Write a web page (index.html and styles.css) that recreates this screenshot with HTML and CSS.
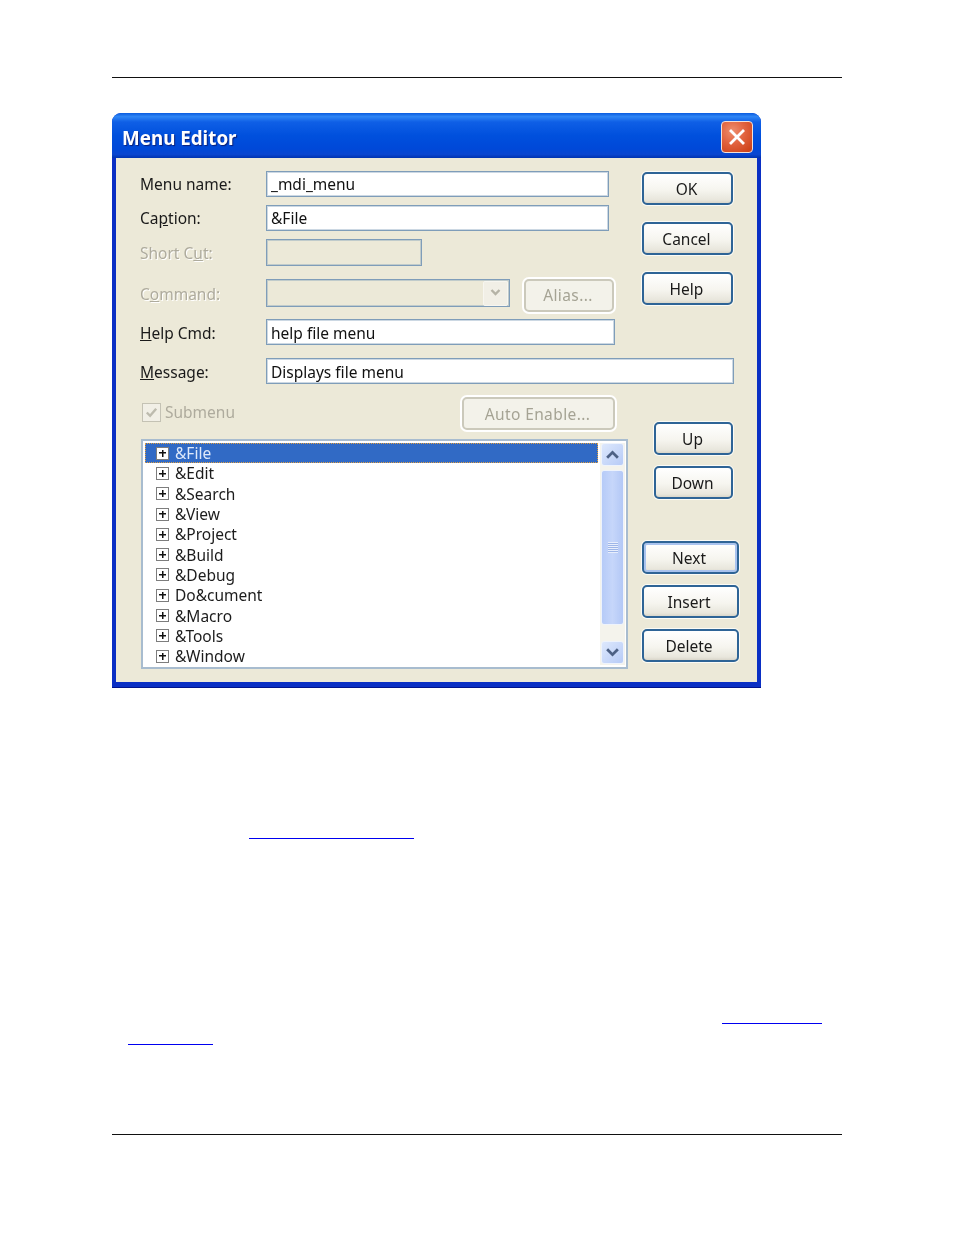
FILE: index.html
```html
<!DOCTYPE html>
<html lang="en">
<head>
<meta charset="utf-8">
<title>Menu Editor</title>
<link rel="stylesheet" href="styles.css">
</head>
<body>
<div class="page">
  <hr class="rule rule-top">
  <section class="dialog">
    <header class="titlebar">
      <h1 class="title">Menu Editor</h1>
      <button class="close" aria-label="Close">
        <svg viewBox="0 0 30 30" width="20" height="20"><path d="M6 6 L24 24 M24 6 L6 24" stroke="#fff" stroke-width="4.2" stroke-linecap="square" fill="none"/></svg>
      </button>
    </header>
    <div class="panel">
      <div class="top">
        <div class="fields">
          <div class="row row-name"><label class="label">Menu name:</label><div class="field field-name">_mdi_menu</div></div>
          <div class="row row-caption"><label class="label">Ca<u>p</u>tion:</label><div class="field field-name">&amp;File</div></div>
          <div class="row row-short"><label class="label disabled">Short C<u>u</u>t:</label><div class="field field-short off"></div></div>
          <div class="row row-command">
            <label class="label disabled">C<u>o</u>mmand:</label>
            <div class="field field-command off">
              <span class="combo-btn"><svg viewBox="0 0 12 10" width="13" height="10"><path d="M2 2 L6 6 L10 2" stroke="#b5b3a6" stroke-width="2.4" fill="none"/></svg></span>
            </div>
            <button class="btn btn-off btn-alias">Alias...</button>
          </div>
          <div class="row row-help"><label class="label"><u>H</u>elp Cmd:</label><div class="field field-help">help file menu</div></div>
        </div>
        <div class="actions">
          <button class="btn btn-main">OK</button>
          <button class="btn btn-main">Cancel</button>
          <button class="btn btn-main">Help</button>
        </div>
      </div>
      <div class="row row-message"><label class="label"><u>M</u>essage:</label><div class="field field-message">Displays file menu</div></div>
      <div class="bottom">
        <div class="left">
          <div class="submenu">
            <span class="check"><span class="check-box"><svg viewBox="0 0 16 16" width="15" height="15"><path d="M3 8 L6.5 11.5 L13 4" stroke="#bdbbae" stroke-width="2.6" fill="none"/></svg></span><span class="check-text">Submenu</span></span>
            <button class="btn btn-off btn-auto">Auto Enable...</button>
          </div>
          <div class="list">
            <ul class="tree">
              <li class="item selected"><span class="plus"></span>&amp;File</li>
              <li class="item"><span class="plus"></span>&amp;Edit</li>
              <li class="item"><span class="plus"></span>&amp;Search</li>
              <li class="item"><span class="plus"></span>&amp;View</li>
              <li class="item"><span class="plus"></span>&amp;Project</li>
              <li class="item"><span class="plus"></span>&amp;Build</li>
              <li class="item"><span class="plus"></span>&amp;Debug</li>
              <li class="item"><span class="plus"></span>Do&amp;cument</li>
              <li class="item"><span class="plus"></span>&amp;Macro</li>
              <li class="item"><span class="plus"></span>&amp;Tools</li>
              <li class="item"><span class="plus"></span>&amp;Window</li>
            </ul>
            <div class="scrollbar">
              <span class="sb-btn"><svg viewBox="0 0 14 10" width="15" height="11"><path d="M2 8 L7 3 L12 8" stroke="#4d6185" stroke-width="2.6" fill="none"/></svg></span>
              <span class="sb-thumb"><span class="grip"></span></span>
              <span class="sb-btn sb-down"><svg viewBox="0 0 14 10" width="15" height="11"><path d="M2 2 L7 7 L12 2" stroke="#4d6185" stroke-width="2.6" fill="none"/></svg></span>
            </div>
          </div>
        </div>
        <div class="side">
          <button class="btn btn-narrow btn-up">Up</button>
          <button class="btn btn-narrow">Down</button>
          <button class="btn btn-wide btn-default">Next</button>
          <button class="btn btn-wide">Insert</button>
          <button class="btn btn-wide">Delete</button>
        </div>
      </div>
    </div>
  </section>
  <div class="links">
    <p class="line line-one"><a class="link link-one"></a></p>
    <p class="line line-two"><a class="link link-two"></a></p>
    <p class="line line-three"><a class="link link-three"></a></p>
  </div>
  <hr class="rule rule-bottom">
</div>
</body>
</html>
```
FILE: styles.css
```css
* { box-sizing: border-box; }
html, body { margin: 0; padding: 0; background: #fff; }
body { font-family: "Noto Sans", "Open Sans", sans-serif; }
.page { width: 954px; height: 1235px; padding: 77px 112px 0; overflow: hidden; }
.rule { display: block; width: 730px; height: 1px; margin: 0; border: 0; background: #111; }

.dialog {
  width: 649px; height: 575px; margin-top: 35px;
  background: #0a2fc4;
  border-radius: 9px 9px 0 0;
  padding: 0 4px 5px;
  display: flex; flex-direction: column;
  filter: blur(0.4px);
  border-bottom: 1px solid #00138c;
}
.titlebar {
  height: 45px; margin: 0 -4px; padding: 8px 8px 0 10px;
  border-radius: 9px 9px 0 0;
  background: linear-gradient(180deg, #0a5ce0 0, #2f86f5 8%, #0f5fe6 20%, #0050dd 50%, #0048d8 80%, #0a46d0 92%, #0033b0 100%);
  display: flex; justify-content: space-between; align-items: flex-start;
}
.title {
  margin: 4px 0 0; font-family: "Noto Sans", sans-serif; font-size: 18.8px; font-weight: 700;
  line-height: 26px; color: #fff; text-shadow: 1px 1px 1px #0a1f78;
}
.close {
  width: 32px; height: 32px; padding: 0; border: 1px solid #f3e0d8; border-radius: 4px;
  background: radial-gradient(circle at 35% 30%, #ee8e6e 0, #e1623e 45%, #c93c12 100%);
  display: flex; align-items: center; justify-content: center;
}
.panel { flex: 1; background: #ece9d8; padding: 13px 0 0 24px; }
.top { display: flex; height: 175px; }
.fields { width: 476px; }
.actions { margin-left: 26px; padding-top: 1px; width: 91px; display: flex; flex-direction: column; gap: 17px; }

.row { display: flex; align-items: center; height: 26px; }
.row-caption { margin-top: 8px; }
.row-short { margin-top: 8px; height: 27px; }
.row-command { margin-top: 13px; height: 28px; }
.row-help { margin-top: 12px; }
.row-message { margin-top: 12px; }

.label { width: 126px; flex: none; font-size: 15.5px; line-height: 20px; color: #1a1a1a; }
.disabled { color: #aeab9d; text-shadow: 1px 1px 0 #fff; }
.row-help .label, .row-message .label, .row-command .label { padding-top: 2px; }
.field {
  height: 100%; border: 1px solid #7f9db9; box-shadow: inset 0 0 0 1px rgba(127, 157, 185, 0.4);
  background: #fff; padding: 0 4px; font-size: 15.5px; line-height: 24px; color: #111;
}
.row-help .field, .row-message .field { line-height: 26px; }
.off { background: #ece9d8; }
.field-name { width: 343px; }
.field-short { width: 156px; }
.field-command { width: 244px; position: relative; display: flex; justify-content: flex-end; align-items: center; padding: 1px; }
.field-help { width: 349px; }
.field-message { width: 468px; }
.combo-btn {
  width: 25px; height: 25px; border-radius: 2px; background: #f1efe6;
  border: 1px solid #f7f6f0; display: flex; align-items: center; justify-content: center;
}

.btn {
  font-family: inherit; font-size: 15.5px; line-height: 20px; color: #1a1a1a; padding: 0 2px 0 0;
  height: 33px; border: 2px solid #2e6496; border-radius: 5px;
  background: linear-gradient(180deg, #ffffff 0, #f6f5ef 55%, #e8e6dc 90%, #d9d6ca 100%);
  box-shadow: 0 0 0 1px #fbfbf6;
}
.btn-main { width: 91px; }
.btn-off {
  border-color: #cbc9bb; background: #f3f2ea; color: #a5a394; box-shadow: 0 0 0 2px #fff;
}
.btn-alias { width: 90px; height: 33px; margin: 4px 0 0 14px; flex: none; letter-spacing: 0.4px; }
.btn-auto { width: 153px; height: 33px; margin-right: 13px; letter-spacing: 0.4px; }

.bottom { display: flex; margin-top: 12px; }
.left { width: 488px; }
.submenu { height: 35px; display: flex; justify-content: space-between; align-items: center; padding-left: 2px; }
.check { display: flex; align-items: center; gap: 4px; font-size: 15.5px; color: #aeab9d; margin-top: -3px; }
.check-box {
  width: 19px; height: 19px; border: 1px solid #c4c2b4; background: #f1efe6;
  display: flex; align-items: center; justify-content: center;
}
.list {
  width: 487px; height: 230px; margin: 8px 0 0 1px; border: 2px solid #a8bccf;
  background: #fff; padding: 2px 1px 0 2px; display: flex; gap: 2px;
}
.tree { width: 453px; list-style: none; margin: 0; padding: 0; }
.item {
  height: 20.3px; padding-left: 11px; display: flex; align-items: center; gap: 6px;
  font-size: 15.5px; line-height: 20px; color: #1c1c1c; white-space: nowrap;
}
.plus {
  width: 13px; height: 13px; flex: none; border: 1px solid #7d7d7d; background:
    linear-gradient(#111, #111) center / 7px 1.5px no-repeat,
    linear-gradient(#111, #111) center / 1.5px 7px no-repeat,
    #fff;
}
.selected { background: #316ac5; color: #dfe9fa; outline: 1px dotted #e0a040; outline-offset: -1px; }
.scrollbar {
  width: 25px; height: 222px; background: #f4f3ec; display: flex; flex-direction: column; align-items: center;
}
.sb-btn {
  width: 23px; height: 23px; flex: none; border: 1px solid #eef3fc; border-radius: 3px;
  background: linear-gradient(135deg, #dde8fc, #b7cbf7);
  display: flex; align-items: center; justify-content: center;
}
.sb-thumb {
  width: 23px; height: 155px; margin-top: 4px; flex: none; border-radius: 3px; border: 1px solid #eef3fc;
  background: linear-gradient(90deg, #b6cbf8, #c6d6fa 50%, #b3c8f6);
  display: flex; align-items: center; justify-content: center;
}
.grip {
  width: 10px; height: 11px;
  background: repeating-linear-gradient(180deg, #e8eefc 0 1px, #9eb6e8 1px 2px);
}
.sb-down { margin-top: 16px; }

.side { display: flex; flex-direction: column; margin-left: 14px; width: 97px; }
.side .btn { margin-top: 11px; }
.btn-narrow { width: 79px; margin-left: 12px; }
.side .btn-up { margin-top: 26px; }
.btn-wide { width: 97px; padding-right: 3px; }
.side .btn-default {
  margin-top: 42px;
  box-shadow: 0 0 0 1px #fbfbf6, inset 0 0 0 2px #a9c3ee;
}

.links { height: 446px; display: flex; flex-direction: column; }
.line { margin: 0; height: 1px; flex: none; display: flex; }
.line-one { margin-top: 150px; padding-left: 137px; }
.line-two { margin-top: 184px; padding-left: 610px; }
.line-three { margin-top: 20px; padding-left: 16px; }
.link { display: block; height: 1px; background: #0000f0; }
.link-one { width: 165px; }
.link-two { width: 100px; }
.link-three { width: 85px; }
```
